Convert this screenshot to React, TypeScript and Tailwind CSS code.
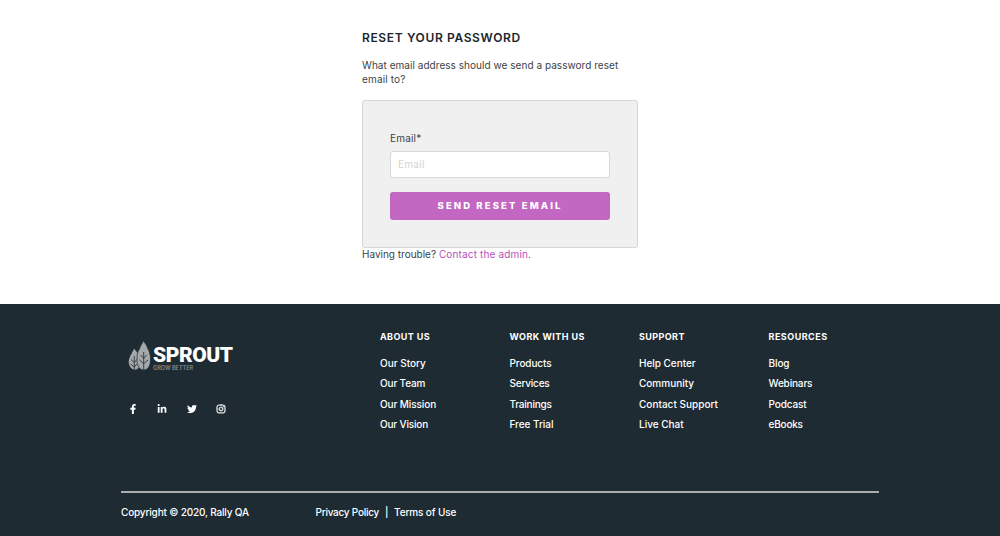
import { FaFacebookF, FaInstagram, FaLinkedinIn, FaTwitter } from "react-icons/fa";

type Item = { label: string; style: string };
type Column = { title: Item; links: Item[] };

const columns: Column[] = [
  {
    title: { label: "ABOUT US", style: "tracking-[0.4px]" },
    links: [
      { label: "Our Story", style: "tracking-[0px]" },
      { label: "Our Team", style: "tracking-[-0.15px]" },
      { label: "Our Mission", style: "tracking-[-0.1px]" },
      { label: "Our Vision", style: "tracking-[-0.18px]" },
    ],
  },
  {
    title: { label: "WORK WITH US", style: "tracking-[0.47px]" },
    links: [
      { label: "Products", style: "tracking-[-0.1px]" },
      { label: "Services", style: "tracking-[-0.2px]" },
      { label: "Trainings", style: "tracking-[-0.22px]" },
      { label: "Free Trial", style: "tracking-[-0.05px]" },
    ],
  },
  {
    title: { label: "SUPPORT", style: "tracking-[0.4px]" },
    links: [
      { label: "Help Center", style: "tracking-[-0.03px]" },
      { label: "Community", style: "tracking-[0px]" },
      { label: "Contact Support", style: "tracking-[0.02px]" },
      { label: "Live Chat", style: "tracking-[0px]" },
    ],
  },
  {
    title: { label: "RESOURCES", style: "tracking-[0.48px]" },
    links: [
      { label: "Blog", style: "tracking-[-0.1px]" },
      { label: "Webinars", style: "tracking-[-0.15px]" },
      { label: "Podcast", style: "tracking-[-0.12px]" },
      { label: "eBooks", style: "tracking-[-0.2px]" },
    ],
  },
];

function Leaves() {
  return (
    <svg viewBox="0 0 23 31" className="h-[31px] w-[23px] shrink-0" fill="none">
      <path d="M6 8.500C5.500 11 4 11.500 3.500 14 1.500 16 2.200 17.500 1 19.500 0 23 1.500 29 6.500 29.800c5-0.800 5.500-4 5.500-8.800 0-4-1-5.500-2-7.500-1-2-3-3-4-5Z" fill="#a4a8aa" />
      <path d="M15.500 0.500C14.500 4 12 5.500 11.500 9 9.500 11.500 9 14 9 19c0 7 2.500 11 6.700 11S22.500 26 22.500 19c0-3-0.500-4-1-6.500C21 10 19.500 9 19 6.500 18 4 16.500 3 15.500 0.500Z" fill="#a4a8aa" stroke="#1f2b32" strokeWidth="0.700" />
      <path d="M6.300 16v14M3 19.500l3.300 3 2.500-3M2.500 24l3.800 3 2.500-3M15.700 12v18M12.700 15l3 3.300 3-3.300M11.500 20l4.200 3.700L20 20" stroke="#2c383e" strokeWidth="0.900" />
    </svg>
  );
}

function Footer() {
  return (
    <footer className="flex h-[232px] flex-col bg-[#1f2b32] pr-[121px] pl-[121px] text-white">
      <div className="flex h-[187px]">
        <div className="w-[259px] shrink-0 pt-[36px] pl-[7px]">
          <div className="flex h-[31px]">
            <Leaves />
            <div className="pt-[7px] pl-[2px] whitespace-nowrap">
              <div className="font-['Roboto',sans-serif] text-[21px] leading-[17px] font-black tracking-[-0.45px]">SPROUT</div>
              <div className="mt-[1px] text-[5.500px] leading-[6px] font-semibold tracking-[0.020px] text-[#858d91]">GROW BETTER</div>
            </div>
          </div>
          <div className="mt-[33px] flex text-[10px]">
            <span className="flex w-[29px]"><FaFacebookF /></span>
            <span className="flex w-[29.500px]"><FaLinkedinIn /></span>
            <span className="flex w-[29px]"><FaTwitter /></span>
            <FaInstagram stroke="white" strokeWidth="16" />
          </div>
        </div>
        {columns.map((c) => (
          <div key={c.title.label} className="w-[129.500px] shrink-0 pt-[26px] whitespace-nowrap">
            <h2 className={"text-[9px] leading-[14px] font-bold " + c.title.style}>{c.title.label}</h2>
            <ul className="mt-[9.400px]">
              {c.links.map((l) => (
                <li key={l.label} className={"h-[20.100px] text-[10px] leading-[20px] font-medium " + l.style}>{l.label}</li>
              ))}
            </ul>
          </div>
        ))}
      </div>
      <div className="flex border-t-2 border-[#a9adaf] pt-[12px] text-[10px] leading-[14px] font-medium whitespace-nowrap">
        <span className="w-[194.500px] tracking-[-0.17px]">Copyright © 2020, Rally QA</span>
        <span className="w-[69.500px] tracking-[-0.25px]">Privacy Policy</span>
        <span className="w-[9px]">|</span>
        <span className="tracking-[-0.12px]">Terms of Use</span>
      </div>
    </footer>
  );
}

export default function App() {
  return (
    <div className="h-[536px] w-[1000px] overflow-hidden bg-white font-['Inter','Liberation_Sans',sans-serif] text-[#3b4247]">
      <main className="h-[304px] pt-[30px] pl-[362px] whitespace-nowrap">
        <h1 className="text-[12px] leading-[16px] font-semibold tracking-[0.630px] text-[#1b262c]">RESET YOUR PASSWORD</h1>
        <p className="mt-[13px] text-[10px] leading-[13.500px]">
          <span className="tracking-[0.040px]">What email address should we send a password reset</span>
          <br />
          <span className="tracking-[0.150px]">email to?</span>
        </p>
        <form className="mt-[14px] flex h-[148px] w-[276px] flex-col rounded-[3px] border border-[#d6d6d6] bg-[#f0f0f0] px-[27px] pt-[30px]">
          <label className="text-[10px] leading-[14px] tracking-[0.2px]">Email*</label>
          <input
            placeholder="Email"
            className="mt-[6px] h-[27px] w-[220px] rounded-[3px] border border-[#d9d9d9] bg-white px-[7px] pb-[1px] text-[10px] tracking-[0.3px] placeholder:text-[#d4d4d4]"
          />
          <button type="button" className="mt-[14px] h-[28px] w-[220px] rounded-[3px] bg-[#c268c2] text-[9.500px] font-extrabold tracking-[2.120px] text-white">
            SEND RESET EMAIL
          </button>
        </form>
        <p className="text-[10px] leading-[13px]">
          <span className="tracking-[0px]">Having trouble? </span>
          <a className="tracking-[0.15px] text-[#b650b8]">Contact the admin</a>.
        </p>
      </main>
      <Footer />
    </div>
  );
}
